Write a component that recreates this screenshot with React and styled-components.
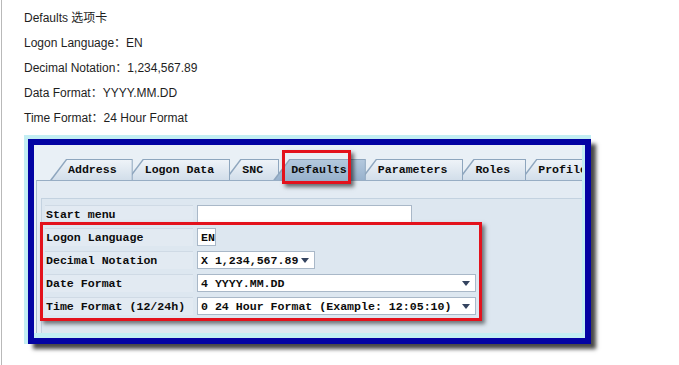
import React from 'react';
import styled, {createGlobalStyle} from 'styled-components';

const GlobalStyle = createGlobalStyle`
  html, body {
    margin: 0;
    padding: 0;
    background: #ffffff;
  }
`;

const tabs = ['Address', 'Logon Data', 'SNC', 'Defaults', 'Parameters', 'Roles', 'Profile'];

const notes = [
    'Defaults 选项卡',
    'Logon Language：EN',
    'Decimal Notation：1,234,567.89',
    'Data Format：YYYY.MM.DD',
    'Time Format：24 Hour Format',
];

const fields = [
    {label: 'Logon Language', value: 'EN', width: 19},
    {label: 'Decimal Notation', value: 'X 1,234,567.89', width: 118, drop: true},
    {label: 'Date Format', value: '4 YYYY.MM.DD', width: 279, drop: true},
    {label: 'Time Format (12/24h)', value: '0 24 Hour Format (Example: 12:05:10)', width: 279, drop: true},
];

const App = () => {
    return (
        <Page>
            <GlobalStyle/>
            <Notes>
                {notes.map((line) => (
                    <Note key={line}>{line}</Note>
                ))}
            </Notes>
            <Frame>
                <BlueBorder>
                    <Screen>
                        <TabStrip>
                            {tabs.map((tab, i) => (
                                <Tab key={tab} $active={tab === 'Defaults'} $first={i === 0} $z={tab === 'Defaults' ? 20 : 10 - i}>
                                    {tab}
                                    {tab === 'Defaults' && <TabMark/>}
                                </Tab>
                            ))}
                        </TabStrip>
                        <Panel>
                            <Group>
                                <Row>
                                    <Label>Start menu</Label>
                                    <Field $width={215}></Field>
                                </Row>
                                <Highlight>
                                    {fields.map((f) => (
                                        <Row key={f.label}>
                                            <Label>{f.label}</Label>
                                            <Field $width={f.width}>
                                                <span>{f.value}</span>
                                                {f.drop && <Arrow/>}
                                            </Field>
                                        </Row>
                                    ))}
                                    <Callout/>
                                </Highlight>
                            </Group>
                        </Panel>
                    </Screen>
                </BlueBorder>
            </Frame>
        </Page>
    );
};

const Page = styled.div`
  margin-left: 1px;
  min-height: 365px;
  border-left: 1px solid #b9b9b9;
  box-sizing: border-box;
`;

const Notes = styled.div`
  padding: 6px 0 0 22px;
`;

const Note = styled.p`
  margin: 0;
  line-height: 25px;
  font-family: "Liberation Sans", "Noto Sans CJK SC", sans-serif;
  font-size: 12px;
  color: #1e1e1e;
`;

const Frame = styled.div`
  margin: 4px 0 0 22px;
  width: 567px;
  padding: 4px 0 0 4px;
  background: #c3eef3;
  box-sizing: border-box;
`;

const BlueBorder = styled.div`
  border: 6px solid #0303a3;
  box-shadow: 5px 5px 4px rgba(0, 0, 0, 0.72);
`;

const Screen = styled.div`
  height: 188px;
  background: #e9f0f6;
  border-right: 3px solid #c3eef3;
  border-bottom: 5px solid #c3eef3;
  overflow: hidden;
  padding-left: 2px;
`;

const TabStrip = styled.div`
  display: flex;
  padding: 14px 0 0 14px;
  white-space: nowrap;
`;

const Tab = styled.div`
  position: relative;
  z-index: ${p => p.$z};
  flex: none;
  display: flex;
  align-items: center;
  height: 20px;
  margin-left: ${p => p.$first ? 0 : -6}px;
  padding: 0 ${p => p.$active ? 19 : 16}px 1px 18px;
  font-family: "Liberation Mono", monospace;
  font-weight: bold;
  font-size: 11.6px;
  color: #0c0c0c;

  &::before {
    content: '';
    position: absolute;
    inset: 0;
    z-index: -1;
    background: #8ea6be;
    clip-path: polygon(0 100%, 16px 0, 100% 0, 100% 100%);
  }

  &::after {
    content: '';
    position: absolute;
    inset: 1px 1px 0 1px;
    z-index: -1;
    background: ${p => p.$active
        ? 'linear-gradient(#b3c8dd, #98b2cd)'
        : 'linear-gradient(#eef3f8, #d2deea)'};
    clip-path: polygon(1px 100%, 16px 0, 100% 0, 100% 100%);
  }
`;

const TabMark = styled.span`
  position: absolute;
  top: -9px;
  bottom: -4px;
  left: 9px;
  right: 15px;
  border: 3px solid #e3121c;
  box-shadow: 3px 3px 4px rgba(0, 0, 0, 0.55);
`;

const Panel = styled.div`
  height: 100%;
  background: #e3ebf3;
  border-top: 1px solid #97adc4;
  border-left: 1px solid #a9bccf;
  padding: 17px 0 0 4px;
`;

const Group = styled.div`
  display: flex;
  flex-direction: column;
  gap: 5px;
  height: 130px;
  background: #dde7f0;
  border: 1px solid #c3d2e0;
  border-right: none;
  padding: 6px 0 0 3px;
`;

const Highlight = styled.div`
  position: relative;
  display: flex;
  flex-direction: column;
  gap: 5px;
`;

const Callout = styled.div`
  position: absolute;
  top: -6px;
  bottom: -6px;
  left: -5px;
  width: 442px;
  box-sizing: border-box;
  border: 3px solid #e3121c;
  box-shadow: 3px 3px 4px rgba(0, 0, 0, 0.5);
  pointer-events: none;
`;

const Row = styled.div`
  display: grid;
  grid-template-columns: 152px auto;
  height: 18px;
  align-items: center;
`;

const Label = styled.div`
  height: 18px;
  margin-right: 4px;
  padding-left: 1px;
  line-height: 18px;
  background: #e2eaf2;
  border-top: 1px solid #cfdae5;
  box-sizing: border-box;
  font-family: "Liberation Mono", monospace;
  font-weight: bold;
  font-size: 11.6px;
  color: #0c0c0c;
  white-space: nowrap;
`;

const Field = styled.div`
  display: flex;
  align-items: center;
  justify-content: space-between;
  width: ${p => p.$width}px;
  height: 18px;
  box-sizing: border-box;
  padding: 0 5px 0 3px;
  background: #ffffff;
  border: 1px solid #a9b8c8;
  font-family: "Liberation Mono", monospace;
  font-weight: bold;
  font-size: 11.6px;
  color: #0c0c0c;
  white-space: nowrap;
`;

const Arrow = styled.i`
  width: 0;
  height: 0;
  border-left: 4.5px solid transparent;
  border-right: 4.5px solid transparent;
  border-top: 5px solid #34435f;
`;

export default App;
